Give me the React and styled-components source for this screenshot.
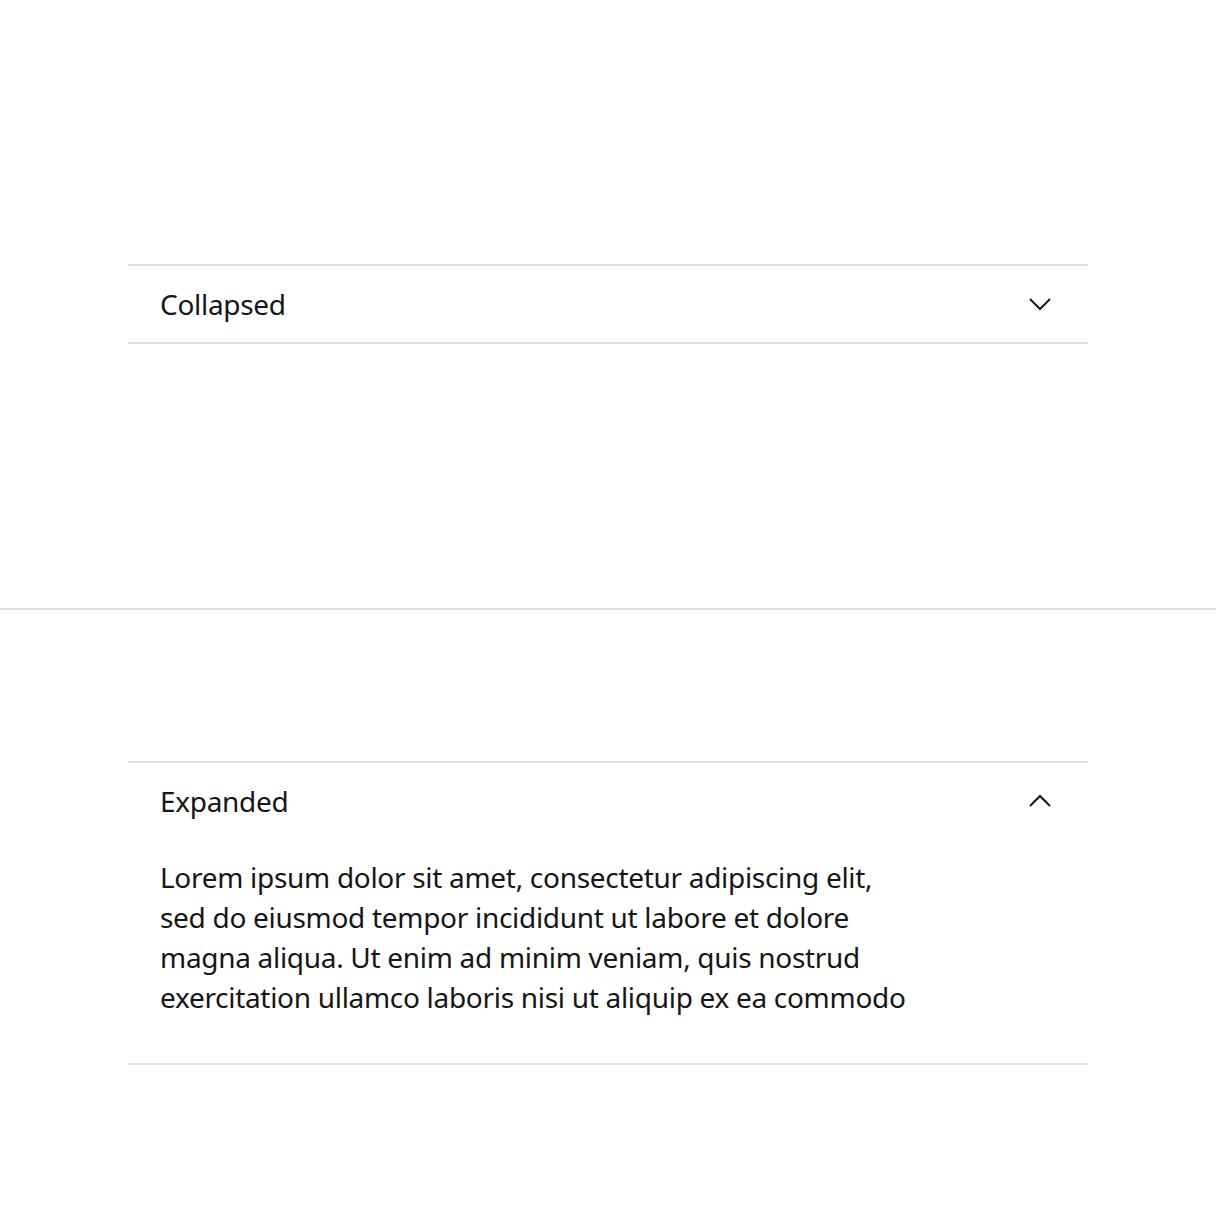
import React from 'react';
import styled, { createGlobalStyle } from 'styled-components';

const GlobalStyle = createGlobalStyle`
  html, body {
    margin: 0;
    padding: 0;
    background: #ffffff;
  }
  body {
    font-family: 'Noto Sans', 'Open Sans', sans-serif;
    color: #161616;
  }
`;

const Page = styled.div`
  display: flex;
  flex-direction: column;
  width: 1216px;
  height: 1216px;
`;

const Section = styled.section`
  flex: ${({ grow }) => grow};
  display: flex;
  flex-direction: column;
  justify-content: center;
  padding: 0 128px;
`;

const Divider = styled.hr`
  margin: 0;
  border: none;
  height: 2px;
  background: #e0e0e0;
`;

const Item = styled.div`
  border-top: 2px solid #e0e0e0;
  border-bottom: 2px solid #e0e0e0;
`;

const Header = styled.div`
  display: flex;
  align-items: center;
  justify-content: space-between;
  height: 76px;
  padding: 0 32px;
`;

const Title = styled.span`
  font-size: 28px;
  line-height: 40px;
  letter-spacing: -0.3px;
`;

const Chevron = styled.svg`
  width: 32px;
  height: 32px;
  transform: ${({ open }) => (open ? 'rotate(180deg)' : 'none')};
`;

const Content = styled.div`
  padding: 18px 32px 46px 32px;
  font-size: 28px;
  line-height: 40px;
  letter-spacing: -0.3px;
  white-space: nowrap;
`;

const Arrow = ({ open }) => (
  <Chevron open={open} viewBox="0 0 32 32" fill="none">
    <polyline points="6,11 16,21 26,11" stroke="#161616" strokeWidth="2" />
  </Chevron>
);

export default function App() {
  return (
    <>
      <GlobalStyle />
      <Page>
        <Section grow="0 0 608px">
          <Item>
            <Header>
              <Title>Collapsed</Title>
              <Arrow />
            </Header>
          </Item>
        </Section>
        <Divider />
        <Section grow="1">
          <Item>
            <Header>
              <Title>Expanded</Title>
              <Arrow open />
            </Header>
            <Content>
              Lorem ipsum dolor sit amet, consectetur adipiscing elit,
              <br />
              sed do eiusmod tempor incididunt ut labore et dolore
              <br />
              magna aliqua. Ut enim ad minim veniam, quis nostrud
              <br />
              exercitation ullamco laboris nisi ut aliquip ex ea commodo
            </Content>
          </Item>
        </Section>
      </Page>
    </>
  );
}
